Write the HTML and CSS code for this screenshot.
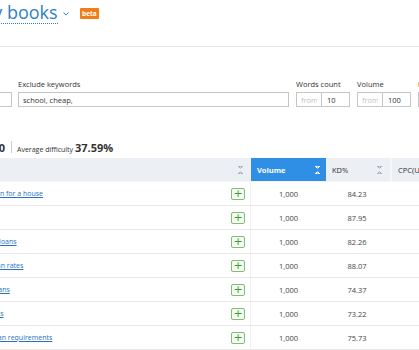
FILE: index.html
```html
<!DOCTYPE html>
<html lang="en">
<head>
    <meta charset="UTF-8">
    <meta name="viewport" content="width=device-width, initial-scale=1.0">
    <title>My books - Keyword Magic</title>
    <link rel="stylesheet" href="styles.css">
</head>
<body>

<div class="page">
    <!-- Заголовок списка -->
    <div class="top-bar">
        <div class="list-title">
            <span class="list-name">My books</span>
            <svg class="chevron" width="6" height="4" viewBox="0 0 6 4"><path d="M0.5 0.5 L3 3 L5.5 0.5" fill="none" stroke="#3a86cc" stroke-width="1"/></svg>
            <span class="beta">beta</span>
        </div>
    </div>

    <!-- Фильтры -->
    <div class="filters">
        <div class="field field-include">
            <label>Include keywords</label>
            <input type="text" class="text-input" value="">
        </div>
        <div class="field field-exclude">
            <label>Exclude keywords</label>
            <input type="text" class="text-input" value="school, cheap,">
        </div>
        <div class="field field-range">
            <label>Words count</label>
            <div class="range">
                <input type="text" placeholder="from">
                <input type="text" value="10">
            </div>
        </div>
        <div class="field field-range">
            <label>Volume</label>
            <div class="range">
                <input type="text" placeholder="from">
                <input type="text" value="100">
            </div>
        </div>
        <div class="field field-range">
            <label>KD%</label>
            <div class="range">
                <input type="text" placeholder="from">
                <input type="text" value="">
            </div>
        </div>
    </div>

    <!-- Итоги -->
    <div class="summary">
        <span class="summary-total">Total volume <b>8,000</b></span>
        <span class="summary-sep"></span>
        <span class="summary-kd">Average difficulty <b>37.59%</b></span>
    </div>

    <!-- Таблица -->
    <div class="table">
        <div class="row head">
            <div class="cell cell-kw">Keyword <i class="sort"></i></div>
            <div class="cell cell-vol active">Volume <i class="sort"></i></div>
            <div class="cell cell-kd">KD% <i class="sort"></i></div>
            <div class="cell cell-cpc">CPC(USD) <i class="sort"></i></div>
        </div>
        <div class="row">
            <div class="cell cell-kw"><a href="#">how to get a loan for a house</a></div>
            <div class="cell cell-add"><button class="add">+</button></div>
            <div class="cell cell-num">1,000</div>
            <div class="cell cell-num">84.23</div>
            <div class="cell cell-cpc"></div>
        </div>
        <div class="row">
            <div class="cell cell-kw"><a href="#">home loans</a></div>
            <div class="cell cell-add"><button class="add">+</button></div>
            <div class="cell cell-num">1,000</div>
            <div class="cell cell-num">87.95</div>
            <div class="cell cell-cpc"></div>
        </div>
        <div class="row">
            <div class="cell cell-kw"><a href="#">personal home loans</a></div>
            <div class="cell cell-add"><button class="add">+</button></div>
            <div class="cell cell-num">1,000</div>
            <div class="cell cell-num">82.26</div>
            <div class="cell cell-cpc"></div>
        </div>
        <div class="row">
            <div class="cell cell-kw"><a href="#">home equity loan rates</a></div>
            <div class="cell cell-add"><button class="add">+</button></div>
            <div class="cell cell-num">1,000</div>
            <div class="cell cell-num">88.07</div>
            <div class="cell cell-cpc"></div>
        </div>
        <div class="row">
            <div class="cell cell-kw"><a href="#">fast personal loans</a></div>
            <div class="cell cell-add"><button class="add">+</button></div>
            <div class="cell cell-num">1,000</div>
            <div class="cell cell-num">74.37</div>
            <div class="cell cell-cpc"></div>
        </div>
        <div class="row">
            <div class="cell cell-kw"><a href="#">home mortgages</a></div>
            <div class="cell cell-add"><button class="add">+</button></div>
            <div class="cell cell-num">1,000</div>
            <div class="cell cell-num">73.22</div>
            <div class="cell cell-cpc"></div>
        </div>
        <div class="row">
            <div class="cell cell-kw"><a href="#">conventional loan requirements</a></div>
            <div class="cell cell-add"><button class="add">+</button></div>
            <div class="cell cell-num">1,000</div>
            <div class="cell cell-num">75.73</div>
            <div class="cell cell-cpc"></div>
        </div>
    </div>
</div>

</body>
</html>
```

FILE: styles.css
```css
/* Общие стили */
body {
    margin: 0;
    font-family: 'Open Sans', 'Noto Sans', sans-serif;
    color: #333;
    background: #fff;
    overflow: hidden;
}

.page {
    margin-left: -120px;
    width: 700px;
}

/* Верхняя панель */
.top-bar {
    height: 46px;
    border-bottom: 1px solid #e6e6e6;
    padding-left: 97px;
}

.list-title {
    display: flex;
    align-items: center;
    height: 26px;
}

.list-name {
    font-size: 18px;
    line-height: 21px;
    color: #2f7fc6;
    border-bottom: 1px dotted #2f7fc6;
}

.chevron {
    margin-left: 5px;
    margin-top: 2px;
}

.beta {
    margin-left: 11px;
    background: #f07d1a;
    color: #fff;
    font-size: 6.5px;
    font-weight: bold;
    padding: 1px 2.5px;
    border-radius: 1px;
    line-height: 9px;
}

/* Фильтры */
.filters {
    display: flex;
    align-items: flex-end;
    gap: 6px;
    margin-top: 32px;
}

.field {
    display: flex;
    flex-direction: column;
}

.field label {
    display: block;
    font-size: 7.5px;
    line-height: 10px;
    color: #333;
    margin-bottom: 3px;
    white-space: nowrap;
}

.field input {
    display: block;
    box-sizing: border-box;
    height: 15px;
    border: 1px solid #c5c5c5;
    font-family: inherit;
    font-size: 7.5px;
    color: #333;
    padding: 0 4px;
    outline: none;
}

.field input::placeholder {
    color: #c3c3c3;
}

.field-include .text-input {
    width: 132px;
}

.field-exclude .text-input {
    width: 271px;
}

.field-range {
    margin-left: 1px;
}

.range {
    display: flex;
}

.range input {
    width: 26px;
}

.range input + input {
    width: 28px;
    border-left: none;
    padding-left: 5px;
}

/* Итоги */
.summary {
    display: flex;
    align-items: center;
    margin-top: 33px;
    height: 14px;
}

.summary-total {
    width: 125px;
    text-align: right;
    font-size: 8px;
    white-space: nowrap;
}

.summary-total b,
.summary-kd b {
    font-size: 11px;
    font-weight: bold;
    color: #333;
}

.summary-sep {
    width: 1px;
    height: 12px;
    background: #ccc;
    margin: 0 5px 0 6px;
}

.summary-kd {
    font-size: 7px;
}

/* Таблица */
.table {
    margin-top: 4px;
}

.row {
    display: grid;
    grid-template-columns: 346px 25px 75px 62px 120px;
    height: 24px;
    border-bottom: 1px solid #e8e8e8;
    box-sizing: border-box;
}

.row.head {
    grid-template-columns: 371px 75px 62px 120px;
    background: #eceff3;
    border-bottom: 1px solid #f4f5f7;
}

.cell {
    display: flex;
    align-items: center;
    font-size: 7.5px;
}

.head .cell {
    padding: 0 6px;
    justify-content: space-between;
    color: #333;
}

.head .cell-cpc {
    border-left: 2px solid #f6f7f9;
    margin-left: 2px;
    justify-content: flex-start;
}

.head .active {
    background: #2f8fe4;
    color: #fff;
    font-weight: bold;
}

.sort {
    display: inline-block;
    width: 5px;
    height: 8px;
    background:
        linear-gradient(to top right, transparent 50%, #a9b0b8 50%) 0 0 / 2.5px 3px no-repeat,
        linear-gradient(to top left, transparent 50%, #a9b0b8 50%) 2.5px 0 / 2.5px 3px no-repeat,
        linear-gradient(to bottom right, transparent 50%, #a9b0b8 50%) 0 5px / 2.5px 3px no-repeat,
        linear-gradient(to bottom left, transparent 50%, #a9b0b8 50%) 2.5px 5px / 2.5px 3px no-repeat;
}

.head .cell-kw .sort {
    margin-right: 2px;
}

.active .sort {
    background:
        linear-gradient(to top right, transparent 50%, #fff 50%) 0 0 / 2.5px 3px no-repeat,
        linear-gradient(to top left, transparent 50%, #fff 50%) 2.5px 0 / 2.5px 3px no-repeat,
        linear-gradient(to bottom right, transparent 50%, #fff 50%) 0 5px / 2.5px 3px no-repeat,
        linear-gradient(to bottom left, transparent 50%, #fff 50%) 2.5px 5px / 2.5px 3px no-repeat;
}

.cell-kw a {
    color: #2a72c0;
    text-decoration: underline;
    font-size: 7px;
    padding-left: 68px;
    white-space: nowrap;
}

.cell-add {
    justify-content: flex-start;
    padding-left: 5px;
    border-right: 1px solid #f1f1f1;
}

.add {
    width: 14px;
    height: 12px;
    padding: 0;
    border: 1px solid #7dbd74;
    border-radius: 2px;
    background: #f5fbf3;
    color: #3d9a32;
    font-size: 11px;
    line-height: 9px;
    font-family: 'DejaVu Sans', sans-serif;
    cursor: pointer;
}

.cell-num {
    justify-content: center;
    color: #444;
}
```
